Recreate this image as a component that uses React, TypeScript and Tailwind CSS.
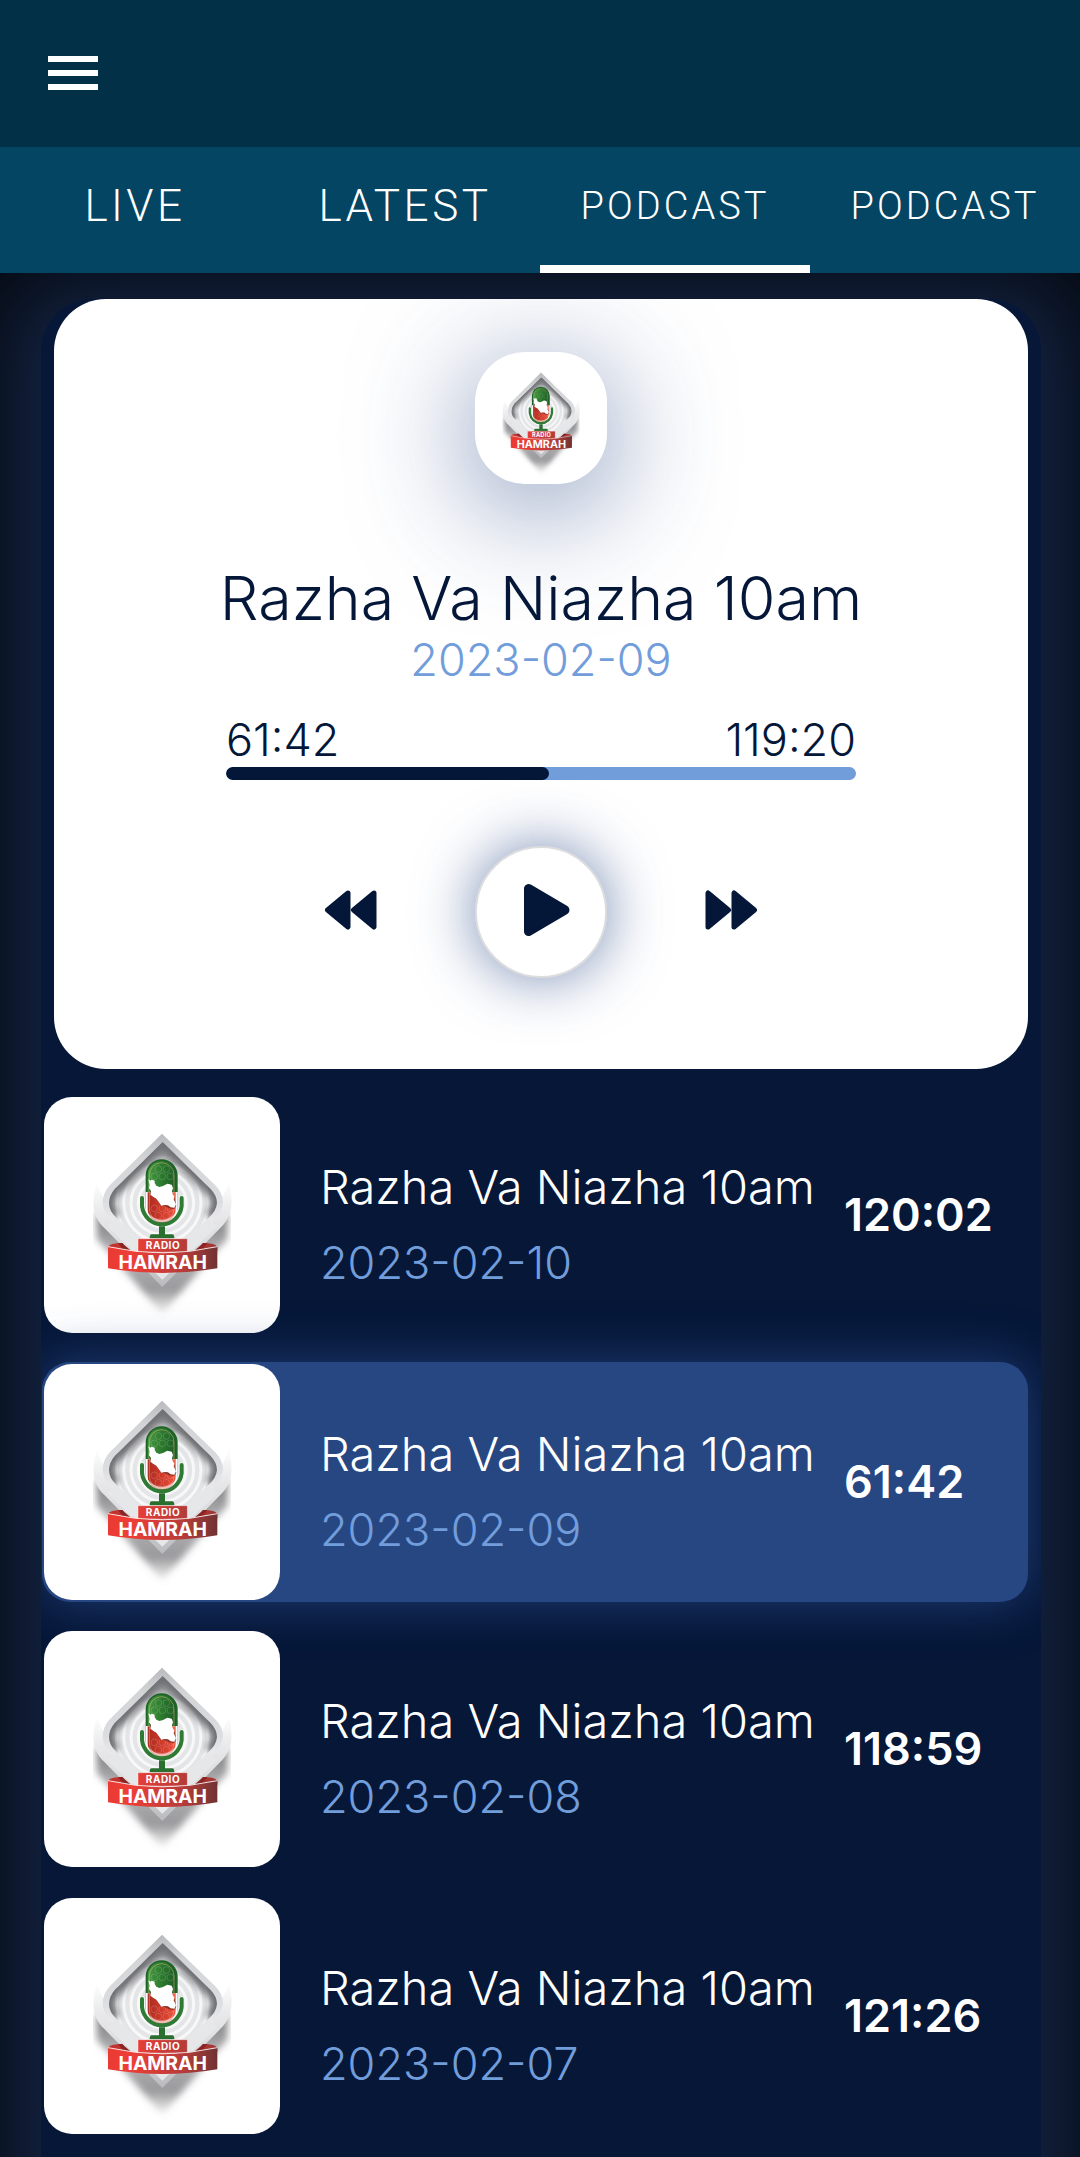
import { useId, useState } from "react";

const TABS = [
  { id: "live", label: "LIVE", size: "text-[44px]" },
  { id: "latest", label: "LATEST", size: "text-[44px]" },
  { id: "podcast-1", label: "PODCAST", size: "text-[38px]" },
  { id: "podcast-2", label: "PODCAST", size: "text-[38px]" },
];

const EPISODES = [
  { title: "Razha Va Niazha 10am", date: "2023-02-10", duration: "120:02" },
  { title: "Razha Va Niazha 10am", date: "2023-02-09", duration: "61:42" },
  { title: "Razha Va Niazha 10am", date: "2023-02-08", duration: "118:59" },
  { title: "Razha Va Niazha 10am", date: "2023-02-07", duration: "121:26" },
];

function Logo() {
  const id = useId();
  const ref = (name: string) => `url(#${id}${name})`;

  return (
    <svg viewBox="0 0 708 708" className="block h-full w-full" role="img" aria-label="Radio Hamrah">
      <defs>
        <linearGradient id={`${id}shade`} x1="0" y1="330" x2="0" y2="665" gradientUnits="userSpaceOnUse">
          <stop offset="0" stopColor="#6a6a6e" />
          <stop offset=".4" stopColor="#77777b" stopOpacity=".55" />
          <stop offset=".75" stopColor="#55555a" stopOpacity=".6" />
          <stop offset="1" stopColor="#999" stopOpacity="0" />
        </linearGradient>
        <linearGradient id={`${id}wing`} x1="0" y1="250" x2="0" y2="570" gradientUnits="userSpaceOnUse">
          <stop offset="0" stopColor="#fff" />
          <stop offset=".3" stopColor="#e9e9eb" />
          <stop offset=".6" stopColor="#dcdcdf" />
          <stop offset="1" stopColor="#b9babd" />
        </linearGradient>
        <linearGradient id={`${id}frame`} x1="0" y1="110" x2="0" y2="400" gradientUnits="userSpaceOnUse">
          <stop offset="0" stopColor="#b9babd" />
          <stop offset=".25" stopColor="#d3d4d6" />
          <stop offset=".7" stopColor="#dcdde0" />
          <stop offset="1" stopColor="#f0f0f1" />
        </linearGradient>
        <linearGradient id={`${id}green`} x1="0" x2="1">
          <stop offset="0" stopColor="#4a9a44" />
          <stop offset=".5" stopColor="#2c7a2e" />
          <stop offset="1" stopColor="#1d5a24" />
        </linearGradient>
        <linearGradient id={`${id}red`} x1="0" x2="1">
          <stop offset="0" stopColor="#a92a20" />
          <stop offset=".5" stopColor="#cf3a2a" />
          <stop offset="1" stopColor="#ee5340" />
        </linearGradient>
        <linearGradient id={`${id}ribbon`} x1="192" x2="520" y1="0" y2="0" gradientUnits="userSpaceOnUse">
          <stop offset="0" stopColor="#e93a33" />
          <stop offset=".2" stopColor="#ee3e36" />
          <stop offset=".7" stopColor="#b53c3a" />
          <stop offset="1" stopColor="#6f3332" />
        </linearGradient>
        <filter id={`${id}blur`} x="-20%" y="-20%" width="140%" height="140%">
          <feGaussianBlur stdDeviation="11" />
        </filter>
        <clipPath id={`${id}sides`}>
          <path d="M147 300H561V708H147z" />
        </clipPath>
        <clipPath id={`${id}hole`}>
          <path d="M356 135 500 276Q519 296 519 318 517 342 494 362L356 496 217 362Q195 342 195 318 195 296 212 276z" />
        </clipPath>
        <clipPath id={`${id}capsule`}>
          <rect x="311" y="192" width="84" height="186" rx="42" />
        </clipPath>
      </defs>

      {/* cast shadow */}
      <g clipPath={ref("sides")}>
        <path d="M158 345V425L355 650 550 425V345L355 520z" fill={ref("shade")} filter={ref("blur")} />
      </g>

      {/* diamond */}
      <path d="M158 258C140 325 148 362 182 394L355 570 528 394C562 362 570 325 556 258L520 330 355 480 190 330z" fill={ref("wing")} />
      <path d="M354 110 513 264Q537 288 537 316 534 348 506 374L355 522 205 374Q176 348 176 316 176 288 198 264z" fill={ref("frame")} />
      <g clipPath={ref("hole")}>
        <path d="M190 130H525V500H190z" fill="#e4e5e7" />
        <g fill="none" stroke="#f8f8f9" strokeWidth="9">
          <circle cx="355" cy="318" r="72" />
          <circle cx="355" cy="318" r="94" />
          <circle cx="355" cy="318" r="116" />
          <circle cx="355" cy="318" r="138" />
        </g>
        {/* depth under the upper edges */}
        <path
          d="M212 362Q192 342 192 318 192 296 212 276L356 135 500 276Q522 296 522 318 522 342 498 362"
          fill="none"
          stroke="#55565b"
          strokeWidth="40"
          strokeOpacity=".85"
          filter={ref("blur")}
        />
        <path d="M356 130 416 196 356 190 296 196z" fill="#77787c" opacity=".6" filter={ref("blur")} />
      </g>
      <path d="M217 362 356 496 494 362 506 374 520 388 355 548 190 388z" fill="#e6e7e9" />

      {/* microphone */}
      <rect x="305" y="187" width="96" height="196" rx="48" fill="#1f6427" />
      <path d="M305 285H401V335A48 48 0 0 1 305 335z" fill="#fff" />
      <g clipPath={ref("capsule")}>
        <rect x="309" y="188" width="88" height="98" fill={ref("green")} />
        <rect x="309" y="286" width="88" height="96" fill={ref("red")} />
        <g fill="none" stroke="#fff" strokeOpacity=".16" strokeWidth="3">
          <circle cx="343" cy="216" r="10" />
          <circle cx="367" cy="216" r="10" />
          <circle cx="331" cy="238" r="10" />
          <circle cx="355" cy="238" r="10" />
          <circle cx="379" cy="238" r="10" />
          <circle cx="331" cy="334" r="10" />
          <circle cx="355" cy="334" r="10" />
          <circle cx="379" cy="334" r="10" />
          <circle cx="343" cy="356" r="10" />
          <circle cx="367" cy="356" r="10" />
        </g>
        <rect x="316" y="197" width="74" height="176" rx="37" fill="none" stroke="#f4c58c" strokeOpacity=".45" strokeWidth="3" />
      </g>
      <path
        d="M314 276 322 298 338 307 350 326 363 328 373 333 390 337 397 326 391 301z"
        fill="#5a1f16"
        opacity=".6"
      />
      <path
        d="M313 247 319 251 323 248 332 251 332 258 337 266 346 270 357 267 370 260 383 263 387 273 384 283 386 291 391 299 389 307 396 322 391 332 380 331 372 325 362 324 352 326 344 315 337 305 327 299 319 293 321 282 315 273 317 263z"
        fill="#fff"
      />
      <path d="M294 303V328A61 62 0 0 0 413 328V303" fill="none" stroke="#fff" strokeWidth="17" strokeLinecap="round" strokeOpacity=".6" />
      <path d="M294 303V328A60 62 0 0 0 413 328V303" fill="none" stroke="#2f7a34" strokeWidth="12" strokeLinecap="round" />
      <path d="M345 388H363V412H385Q391 412 391 424H317Q317 412 323 412H345z" fill="#2a6f30" />

      {/* ribbon */}
      <path d="M192 450Q196 438 236 438L250 462H192z" fill="#c23330" />
      <path d="M520 450Q516 438 476 438L462 462H520z" fill="#a53634" />
      <path d="M240 462 222 438H234L262 462zM472 462 490 438H478L450 462z" fill="#8b2523" />
      <path d="M192 448Q355 486 520 448V514Q355 542 192 514z" fill={ref("ribbon")} />
      <path d="M192 449Q355 486 520 449" fill="none" stroke="#fff" strokeOpacity=".85" strokeWidth="3" />
      <path d="M282 425H430V463Q355 469 282 463z" fill={ref("ribbon")} stroke="#fff" strokeOpacity=".6" strokeWidth="2" />
      <text x="357" y="456" textAnchor="middle" fill="#fff" className="font-[Inter,sans-serif] text-[30px] font-bold tracking-wider">
        RADIO
      </text>
      <text x="356" y="517" textAnchor="middle" fill="#fff" className="font-[Inter,sans-serif] text-[58px] font-bold">
        HAMRAH
      </text>
    </svg>
  );
}

function SkipIcon({ className = "" }: { className?: string }) {
  return (
    <svg viewBox="0 0 52 40" className={`h-10 w-[52px] ${className}`} fill="#051739" stroke="#051739" strokeWidth="5" strokeLinejoin="round" aria-hidden="true">
      <path d="M3 3V37L23.500 20zM29 3V37L49.500 20z" />
    </svg>
  );
}

function Player() {
  const progress = 51.3;

  return (
    <section className="mx-[13px] flex flex-col items-center rounded-[52px] bg-white pt-[53px] pb-[91px] text-[#051739]">
      <div className="size-[132px] rounded-[50px] bg-white shadow-[0_20px_120px_rgba(39,71,133,0.65)]">
        <Logo />
      </div>
      <h1 className="mt-[78px] text-[61px] leading-[72px] font-light">Razha Va Niazha 10am</h1>
      <p className="text-[45px] leading-[52px] font-light text-[#729ddb]">2023-02-09</p>

      <div className="mt-8 w-[630px] max-w-full">
        <div className="flex justify-between text-[45px] leading-[44px] font-light">
          <span>61:42</span>
          <span>119:20</span>
        </div>
        <div
          role="progressbar"
          aria-label="Playback position"
          aria-valuenow={progress}
          className="mt-[5px] h-[13px] overflow-hidden rounded-full bg-[#729ddb]"
        >
          <div className="h-full rounded-full bg-[#051739]" style={{ width: `${progress}%` }} />
        </div>
      </div>

      <div className="mt-[66px] flex items-center gap-[98px]">
        <button type="button" aria-label="Rewind" className="pb-1">
          <SkipIcon className="rotate-180" />
        </button>
        <button
          type="button"
          aria-label="Play"
          className="flex size-[132px] items-center justify-center rounded-full border-2 border-[#dddddf] bg-white pb-1 shadow-[0_0_60px_rgba(39,71,133,0.65)]"
        >
          <svg viewBox="0 0 56 56" className="ml-3 size-14" fill="#051739" stroke="#051739" strokeWidth="9" strokeLinejoin="round" aria-hidden="true">
            <path d="M9.500 6.500V49.500L46 28z" />
          </svg>
        </button>
        <button type="button" aria-label="Fast forward" className="pb-1">
          <SkipIcon />
        </button>
      </div>
    </section>
  );
}

export default function App() {
  const [tab, setTab] = useState("podcast-1");
  const [current, setCurrent] = useState(1);

  return (
    <div className="flex min-h-screen flex-col bg-[#152545] font-[Inter,sans-serif]">
      <header className="flex h-[147px] items-start bg-[#023047] px-12 pt-14">
        <button type="button" aria-label="Menu" className="flex w-[50px] flex-col gap-2">
          <span className="h-1.5 w-full bg-white" />
          <span className="h-1.5 w-full bg-white" />
          <span className="h-1.5 w-full bg-white" />
        </button>
      </header>

      <nav className="grid h-[126px] grid-cols-4 bg-[#034563]">
        {TABS.map((t) => (
          <button
            key={t.id}
            type="button"
            onClick={() => setTab(t.id)}
            className={`border-b-8 font-[Roboto,sans-serif] font-light tracking-[0.08em] text-white ${t.size} ${
              tab === t.id ? "border-white" : "border-transparent"
            }`}
          >
            {t.label}
          </button>
        ))}
      </nav>

      <main className="relative flex flex-1 flex-col overflow-hidden pt-[26px] pr-[39px] pl-[41px]">
        {/* vignette, runs past the bottom edge so only the top and sides darken */}
        <div className="absolute inset-x-0 top-0 -bottom-40 shadow-[inset_0_0_100px_rgba(0,0,0,0.9)]" />

        <div className="relative flex-1 overflow-hidden rounded-t-[52px] bg-[#061738]">
          <Player />

          <ul className="mt-[26px] mr-[13px] ml-px flex flex-col gap-[27px]">
            {EPISODES.map((e, i) => (
              <li key={e.date}>
                <button
                  type="button"
                  onClick={() => setCurrent(i)}
                  className={`flex w-full items-center rounded-[28px] p-0.5 text-left font-light ${
                    current === i ? "bg-[#274783] shadow-[0_0_50px_rgba(39,71,133,0.8)]" : ""
                  }`}
                >
                  <span className="size-[236px] shrink-0 overflow-hidden rounded-[28px] bg-white">
                    <Logo />
                  </span>
                  <span className="ml-10 flex flex-1 flex-col gap-4 pt-5">
                    <span className="text-[47px] leading-[60px] text-white">{e.title}</span>
                    <span className="text-[45px] leading-[60px] text-[#729ddb]">{e.date}</span>
                  </span>
                  <span className="w-[182px] text-[45px] font-semibold text-white">{e.duration}</span>
                </button>
              </li>
            ))}
          </ul>
        </div>
      </main>
    </div>
  );
}
